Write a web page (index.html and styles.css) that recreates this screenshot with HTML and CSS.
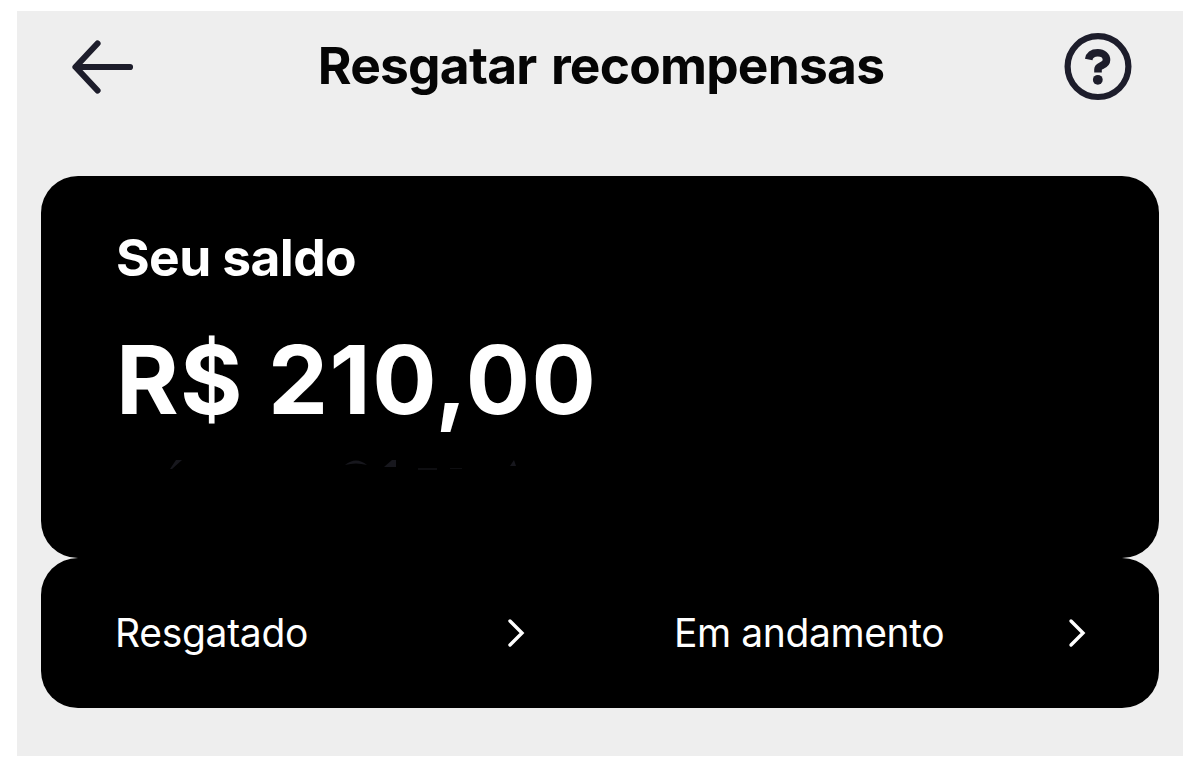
FILE: index.html
```html
<!DOCTYPE html>
<html lang="pt-BR">

<head>
    <meta charset="UTF-8">
    <meta name="viewport" content="width=device-width, initial-scale=1.0">
    <title>Resgatar recompensas</title>
    <link rel="stylesheet" href="styles.css">
</head>

<body>
    <div class="screen">
        <header class="header flex-between">
            <svg class="back" viewBox="0 0 64 56">
                <path d="M26.5 4.5 4.5 28 26.5 51.5M5 28H59" />
            </svg>
            <h1>Resgatar recompensas</h1>
            <svg class="help" viewBox="0 0 68 68">
                <circle cx="34" cy="33.6" r="30.4" />
                <path d="M24.7 26.5C25.5 22 29 19.8 33.8 19.8c5.2 0 8.7 3 8.7 7.2 0 6.2-8.5 5-8.5 9.2V39.4" />
                <circle class="dot" cx="33.8" cy="46.8" r="4.9" />
            </svg>
        </header>

        <main>
            <section class="card balance">
                <h2>Seu saldo</h2>
                <p class="amount">R$ 210,00</p>
                <svg class="faded" viewBox="0 0 370 12">
                    <path d="M13 9 19 0h6L15 9zM188 5q11-9 22 0-11-3-22 0zM227 7l8-7h4v7zM353 6l4-6 2 6z" />
                    <path class="dim" d="M261 8h19v2h-19zM293 8h12v1h-12z" />
                </svg>
            </section>
            <nav class="card links">
                <a class="link flex-between">
                    <span>Resgatado</span>
                    <svg class="chevron" viewBox="0 0 20 30"><path d="M4 3 16 15 4 27" /></svg>
                </a>
                <a class="link flex-between">
                    <span>Em andamento</span>
                    <svg class="chevron" viewBox="0 0 20 30"><path d="M4 3 16 15 4 27" /></svg>
                </a>
            </nav>
        </main>
    </div>
</body>

</html>
```
FILE: styles.css
```css
* {
    padding: 0;
    margin: 0;
    box-sizing: border-box;
}

body {
    height: 767px;
    padding: 11px 17px;
    background-color: white;
    font-family: Inter, "Liberation Sans", sans-serif;
    overflow: hidden;
}

.flex-between {
    display: flex;
    justify-content: space-between;
    align-items: center;
}

.screen {
    height: 745px;
    padding: 0 24px;
    background-color: #eee;
}

.header {
    height: 165px;
    padding: 0 27px 53px 30px;
}

.header svg {
    fill: none;
    stroke: #1d1d2b;
    stroke-width: 6.2;
    stroke-linecap: round;
    stroke-linejoin: round;
}

.back {
    width: 64px;
    height: 56px;
}

.help {
    width: 68px;
    height: 68px;
}

.header .help path {
    stroke-width: 7.6;
    stroke-linecap: butt;
}

.header .dot {
    fill: #1d1d2b;
    stroke: none;
}

h1 {
    padding: 0 0 4px 3px;
    font-size: 51.5px;
    line-height: 62px;
    font-weight: 700;
    letter-spacing: -0.8px;
    word-spacing: 3px;
    color: #050505;
    white-space: nowrap;
}

.card {
    background-color: black;
    border-radius: 37px;
    color: white;
}

.balance {
    height: 382px;
    padding: 50px 75px 0;
}

h2 {
    font-size: 51.5px;
    line-height: 62px;
    font-weight: 700;
    letter-spacing: -0.6px;
}

.amount {
    margin-top: 33px;
    font-size: 95.5px;
    line-height: 116px;
    font-weight: 700;
    letter-spacing: 1.4px;
    white-space: nowrap;
}

.faded {
    display: block;
    width: 370px;
    height: 12px;
    margin: 23px 0 0 41px;
    fill: #17171d;
}

.faded .dim {
    fill: #0e0e11;
}

.links {
    height: 150px;
    display: grid;
    grid-template-columns: 1fr 1fr;
}

.link {
    padding: 0 74px;
    font-size: 39px;
    line-height: 48px;
    letter-spacing: -0.3px;
}

.link + .link {
    padding-right: 72px;
    letter-spacing: -0.4px;
}

.chevron {
    width: 20px;
    height: 30px;
    fill: none;
    stroke: white;
    stroke-width: 3.4;
    stroke-linecap: round;
}
```
